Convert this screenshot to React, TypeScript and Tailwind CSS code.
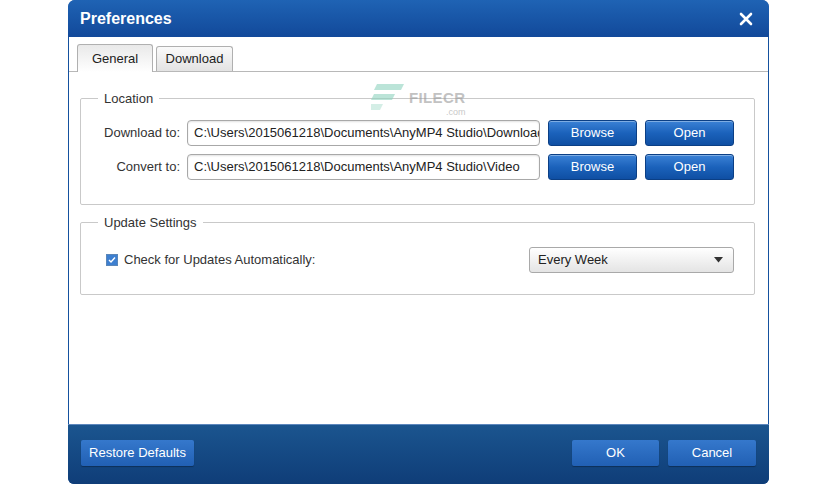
import React from "react"

const font = { fontFamily: '"Liberation Sans", Arial, sans-serif' }

function BlueButton({ children }: { children: React.ReactNode }) {
  return (
    <button className="h-[26px] w-[89px] rounded-[3px] border border-[#0b3f85] bg-gradient-to-b from-[#3b82d6] via-[#1b62bb] to-[#0f4fa3] text-[13px] text-white shadow-[inset_0_1px_0_rgba(255,255,255,0.35)]">
      {children}
    </button>
  )
}

function FooterButton({ children, className }: { children: React.ReactNode; className?: string }) {
  return (
    <button
      className={
        "h-[26px] rounded-[2px] bg-gradient-to-b from-[#3578cc] to-[#2160b4] text-[13px] text-white shadow-[0_1px_1px_rgba(0,0,0,0.3)] " +
        (className ?? "")
      }
    >
      {children}
    </button>
  )
}

function PathRow({ label, path }: { label: string; path: string }) {
  return (
    <div className="flex items-center">
      <div className="w-[106px] pr-[7px] text-right text-[13px] text-[#333]">{label}</div>
      <div className="flex h-[26px] w-[353px] items-center overflow-hidden whitespace-nowrap rounded-[4px] border border-[#a8a8a8] bg-white px-[6px] text-[13px] text-[#222] shadow-[inset_0_1px_2px_rgba(0,0,0,0.12)]">
        {path}
      </div>
      <div className="ml-[8px] flex gap-[8px]">
        <BlueButton>Browse</BlueButton>
        <BlueButton>Open</BlueButton>
      </div>
    </div>
  )
}

function Watermark() {
  return (
    <div className="pointer-events-none absolute left-[302px] top-[46px] flex items-start gap-[4px] opacity-60">
      <svg width="34" height="28" viewBox="0 0 34 28">
        <path d="M6 1 H33 L30 7 H3 Z" fill="#8fd3bf" />
        <path d="M3 11 H24 L21 17 H0 Z" fill="#8fd3bf" />
        <path d="M0 21 H12 L9 27 H0 Z" fill="#b9e4d7" />
      </svg>
      <div className="flex flex-col leading-none">
        <span className="mt-[7px] text-[15px] font-bold tracking-wide text-[#9a9a9a]">FILECR</span>
        <span className="mt-[3px] self-end text-[9px] text-[#a5a5a5]">.com</span>
      </div>
    </div>
  )
}

export default function App() {
  return (
    <div className="h-[484px] w-[836px] overflow-hidden bg-white" style={font}>
      <div className="ml-[68px] flex h-[484px] w-[701px] flex-col overflow-hidden rounded-t-[7px] rounded-b-[6px] bg-[#15519e]">
        {/* title bar */}
        <div className="flex h-[37px] shrink-0 items-center justify-between bg-gradient-to-b from-[#1f63b4] to-[#12499a] pl-[12px] pr-[16px]">
          <span className="text-[16px] font-bold text-white">Preferences</span>
          <svg width="14" height="14" viewBox="0 0 14 14">
            <path d="M2 2 L12 12 M12 2 L2 12" stroke="white" strokeWidth="2.6" strokeLinecap="round" />
          </svg>
        </div>

        {/* body */}
        <div className="relative mx-px flex h-[387px] flex-col bg-white">
          <Watermark />
          {/* tabs */}
          <div className="flex h-[35px] items-end border-b border-[#b8b8b8] pl-[8px]">
            <div className="-mb-px flex h-[28px] w-[76px] items-center justify-center rounded-t-[3px] border border-b-0 border-[#b0b0b0] bg-gradient-to-b from-[#e9e9e9] to-white text-[13px] text-[#222]">
              General
            </div>
            <div className="ml-[3px] flex h-[25px] w-[77px] items-center justify-center rounded-t-[3px] border border-b-0 border-[#b0b0b0] bg-gradient-to-b from-[#fafafa] to-[#e3e3e3] text-[13px] text-[#222]">
              Download
            </div>
          </div>

          {/* location */}
          <fieldset className="ml-[11px] mr-[13px] mt-[17px] rounded-[2px] border border-[#c9c9c9] pb-[24px] pt-[11px]">
            <legend className="ml-[17px] px-[6px] text-[13px] text-[#333]">Location</legend>
            <div className="flex flex-col gap-[8px]">
              <PathRow label="Download to:" path="C:\Users\2015061218\Documents\AnyMP4 Studio\Download" />
              <PathRow label="Convert to:" path="C:\Users\2015061218\Documents\AnyMP4 Studio\Video" />
            </div>
          </fieldset>

          {/* update settings */}
          <fieldset className="ml-[11px] mr-[13px] mt-[8px] rounded-[2px] border border-[#c9c9c9] pb-[21px] pt-[15px]">
            <legend className="ml-[17px] px-[6px] text-[13px] text-[#333]">Update Settings</legend>
            <div className="flex items-center justify-between pl-[25px] pr-[20px]">
              <div className="flex items-center gap-[6px]">
                <span className="flex h-[12px] w-[12px] items-center justify-center border border-[#5a86b8] bg-[#3d7fd0]">
                  <svg width="8" height="8" viewBox="0 0 8 8">
                    <path d="M1 4 L3 6 L7 1.5" stroke="white" strokeWidth="1.4" fill="none" />
                  </svg>
                </span>
                <span className="text-[13px] text-[#333]">Check for Updates Automatically:</span>
              </div>
              <div className="flex h-[26px] w-[205px] items-center justify-between rounded-[3px] border border-[#a9a9a9] bg-gradient-to-b from-white to-[#e4e4e4] pl-[8px] pr-[10px] text-[13px] text-[#222]">
                <span>Every Week</span>
                <svg width="9" height="6" viewBox="0 0 9 6">
                  <path d="M0 0 H9 L4.5 5.5 Z" fill="#333" />
                </svg>
              </div>
            </div>
          </fieldset>
        </div>

        {/* footer */}
        <div className="flex flex-1 items-start justify-between border-t border-[#5d87bd] bg-gradient-to-b from-[#1b558f] to-[#0f3d78] px-[13px] pt-[15px]">
          <FooterButton className="w-[113px]">Restore Defaults</FooterButton>
          <div className="flex gap-[9px]">
            <FooterButton className="w-[87px]">OK</FooterButton>
            <FooterButton className="w-[88px]">Cancel</FooterButton>
          </div>
        </div>
      </div>
    </div>
  )
}
